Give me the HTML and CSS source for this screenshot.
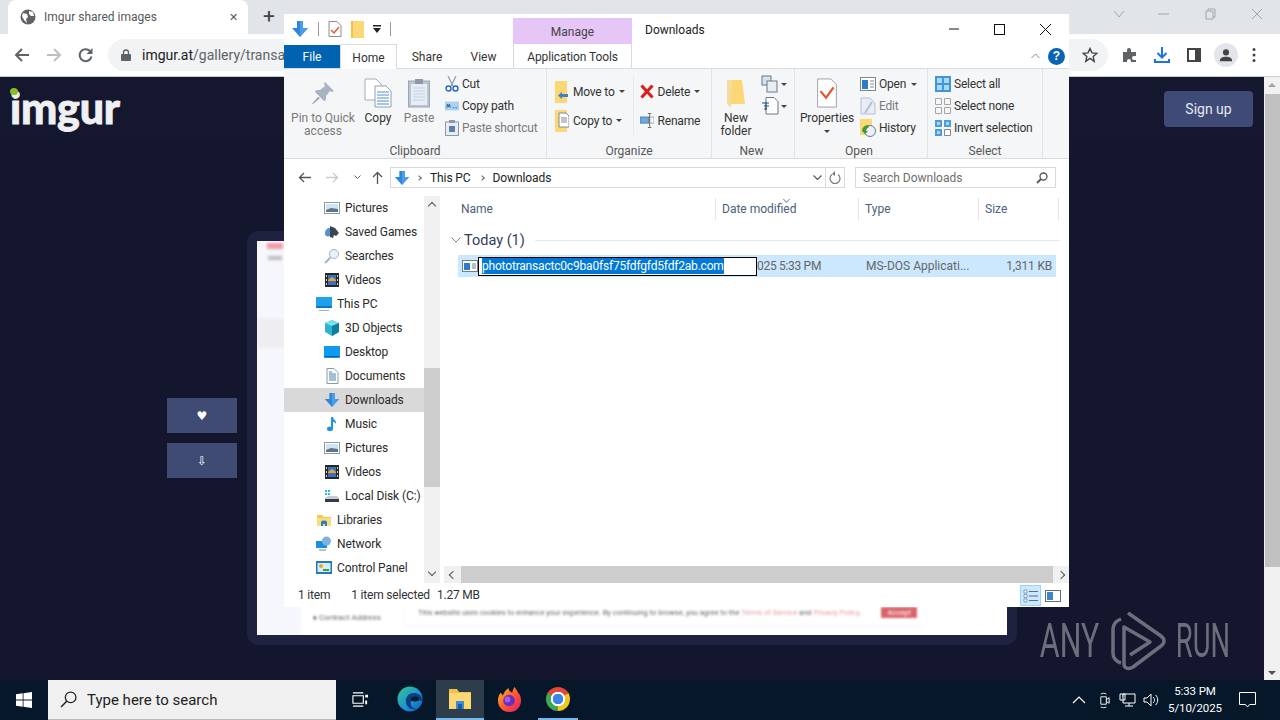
FILE: index.html
```html
<!DOCTYPE html>
<html lang="en">
<head>
<meta charset="utf-8">
<title>Imgur shared images</title>
<link rel="stylesheet" href="styles.css">
</head>
<body>
<svg class="defs" width="0" height="0" aria-hidden="true">
  <symbol id="dl" viewBox="0 0 18 18"><path d="M6 1h6v7h5l-8 9-8-9h5z" fill="#2f86d9"/><path d="M9 1h3v7h5l-8 9z" fill="#4a9de8"/></symbol>
  <symbol id="pics" viewBox="0 0 16 16"><rect x=".5" y="2.5" width="15" height="11" fill="#fff" stroke="#8d9aa8"/><rect x="2" y="4" width="12" height="8" fill="#cfe3f2"/><path d="M2 10l5-2 7 1v3H2z" fill="#5f7486"/></symbol>
  <symbol id="vids" viewBox="0 0 16 16"><rect x="1" y="1" width="14" height="14" fill="#23282e"/><rect x="4" y="3" width="8" height="10" fill="#3f6fbf"/><path d="M4 8l4-3 4 3v1H4z" fill="#e0a92c"/><path d="M2 3h1v2H2zm0 4h1v2H2zm0 4h1v2H2zm11-8h1v2h-1zm0 4h1v2h-1zm0 4h1v2h-1z" fill="#d8d8d8"/></symbol>
  <symbol id="fold" viewBox="0 0 16 16"><path d="M1 3h5l2 2h7v9H1z" fill="#f2c94f"/><path d="M1 6h14v8H1z" fill="#fbdc7d"/><path d="M5 10c0-2 6-2 6 0v4H9v-2H7v2H5z" fill="#2d7fc4"/></symbol>
</svg>

<header class="tabstrip">
  <div class="tab">
    <svg class="favicon" viewBox="0 0 16 16"><circle cx="8" cy="8" r="7.5" fill="#5f6368"/><path d="M3 4l4 1 1 3-2 2 1 4-3-3-2-4zM9 2l4 1 1 4-3 0-2-2z" fill="#fff"/></svg>
    <span class="tab-title">Imgur shared images</span>
    <span class="tab-x">✕</span>
  </div>
  <span class="tab-new">+</span>
  <div class="win-ctrl">
    <svg width="12" height="8" viewBox="0 0 12 8"><path d="M1 1l5 6 5-6" fill="none" stroke="#a4a8ad"/></svg>
    <svg width="11" height="2" viewBox="0 0 11 2"><path d="M0 1h11" stroke="#a4a8ad"/></svg>
    <svg width="11" height="12" viewBox="0 0 11 12"><path d="M3 3V1h7v8H8M1 3h7v8H1z" fill="none" stroke="#a4a8ad"/></svg>
    <svg width="12" height="12" viewBox="0 0 12 12"><path d="M1 1l10 10M11 1L1 11" stroke="#a4a8ad"/></svg>
  </div>
</header>

<nav class="toolbar">
  <svg class="tb-ic" viewBox="0 0 16 16"><path d="M15 8H2M8 2L2 8l6 6" fill="none" stroke="#5f6368" stroke-width="2"/></svg>
  <svg class="tb-ic" viewBox="0 0 16 16"><path d="M1 8h13M8 2l6 6-6 6" fill="none" stroke="#bcc0c4" stroke-width="2"/></svg>
  <svg class="tb-ic" viewBox="0 0 16 16"><path d="M13.5 9.5A6 6 0 1 1 12 4" fill="none" stroke="#5f6368" stroke-width="2"/><path d="M14.5 1v6h-6z" fill="#5f6368"/></svg>
  <div class="omnibox">
    <svg class="lock" viewBox="0 0 10 12"><path d="M2.5 5V3.5a2.5 2.5 0 0 1 5 0V5" fill="none" stroke="#5f6368" stroke-width="1.3"/><rect y="5" width="10" height="7" rx="1" fill="#5f6368"/></svg>
    <span class="url"><b>imgur.at</b>/gallery/transa</span>
    <svg class="star" viewBox="0 0 16 16"><path d="M8 1.5l2 4.4 4.7.5-3.5 3.2 1 4.7L8 11.4l-4.2 2.9 1-4.7L1.300 6.400 6 5.900z" fill="none" stroke="#444" stroke-width="1.400"/></svg>
  </div>
  <div class="tb-right">
    <svg class="tb-ic" viewBox="0 0 16 16"><path d="M1 5h4V3a2 2 0 0 1 4 0v2h5v4h-2a2 2 0 0 0 0 4h2v2H9v-1a2 2 0 0 0-4 0v1H1z" fill="#5f6368"/></svg>
    <svg class="tb-ic" viewBox="0 0 16 16"><path d="M8 0v10M3.500 6L8 10.500 12.500 6M1 12v3h14v-3" fill="none" stroke="#1a73e8" stroke-width="2"/></svg>
    <svg class="tb-ic" viewBox="0 0 16 16"><path d="M2 2h12v12H2z" fill="none" stroke="#444" stroke-width="2"/><path d="M9 2h5v12H9z" fill="#444"/></svg>
    <span class="avatar"><svg viewBox="0 0 16 16" width="14" height="14"><circle cx="8" cy="5" r="3.500" fill="#444"/><path d="M1 15c0-4 3-5 7-5s7 1 7 5z" fill="#444"/></svg></span>
    <svg class="tb-ic tb-last" viewBox="0 0 16 16"><circle cx="8" cy="2.500" r="1.500" fill="#444"/><circle cx="8" cy="8" r="1.500" fill="#444"/><circle cx="8" cy="13.500" r="1.500" fill="#444"/></svg>
  </div>
</nav>

<main class="page">
  <div class="content">
    <div class="site-header">
      <div class="logo">imgur<i class="logo-dot"></i></div>
      <button class="signup">Sign up</button>
    </div>
    <div class="gallery">
      <div class="side-btns">
        <div class="side-btn">♥</div>
        <div class="side-btn">⇩</div>
      </div>
      <div class="card">
        <div class="shot">
          <div class="shot-col">
            <i class="blob-red"></i>
            <i class="blob-gray"></i>
            <i class="blob-pale"></i>
          </div>
          <span class="contract">⬧ Contract Address</span>
          <div class="cookie">
            <span>This website uses cookies to enhance your experience. By continuing to browse, you agree to the <em>Terms of Service</em> and <em>Privacy Policy</em>.</span>
            <b>Accept</b>
          </div>
        </div>
      </div>
    </div>
  </div>
  <div class="vscroll"><i class="up"></i><i class="thumb"></i><i class="down"></i></div>
  <div class="watermark">
    <span class="wm-text wm-any">ANY</span>
    <svg class="wm-logo" viewBox="0 0 56 62"><path d="M11 9C6 11 3 14 3 19v24c0 5 2 8 8 10M18 3l33 23c4 3 4 7 0 10L23 57c-5 3-9 1-9-3V17l26 15-20 13" fill="none" stroke="#6d6e7c" stroke-width="3.500" stroke-linejoin="round"/></svg>
    <span class="wm-text wm-run">RUN</span>
  </div>
</main>

<footer class="taskbar">
  <div class="start"><svg viewBox="0 0 16 16" width="16" height="16"><path d="M0 2.200L6.700 1.300V7.600H0zM7.500 1.200L16 0V7.600H7.500zM0 8.400H6.700V14.700L0 13.800zM7.500 8.400H16V16L7.500 14.800z" fill="#fff"/></svg></div>
  <div class="searchbox">
    <svg viewBox="0 0 16 16" width="17" height="17"><circle cx="10" cy="6" r="5" fill="none" stroke="#222" stroke-width="1.200"/><path d="M6.500 9.500L1 15" stroke="#222" stroke-width="1.400"/></svg>
    <span>Type here to search</span>
  </div>
  <div class="task-btn"><svg viewBox="0 0 18 18" width="17" height="17"><path d="M1 5h11v8H1zM1 2h11M1 16h11" fill="none" stroke="#fff" stroke-width="1.200"/><path d="M14 4h3v3h-3zM14 10h2v4h-2z" fill="#fff"/></svg></div>
  <div class="task-btn"><svg viewBox="0 0 26 26" width="26" height="26"><defs><linearGradient id="edge" x1="0" y1="0" x2="1" y2="1"><stop offset="0" stop-color="#36c78f"/><stop offset=".6" stop-color="#1c8fd8"/><stop offset="1" stop-color="#0d5aa7"/></linearGradient></defs><circle cx="13" cy="13" r="12.500" fill="url(#edge)"/><path d="M25 14c0-5-4-7-8-7-6 0-9 5-8 10 1 4 5 7 10 6-4-1-6-4-5-7 1-2 3-3 6-2l5 1z" fill="#0a3f80"/><ellipse cx="18" cy="13" rx="4" ry="2.500" fill="#051a2c"/></svg></div>
  <div class="task-btn task-active"><svg viewBox="0 0 24 22" width="24" height="22"><path d="M1 1h8l2 3h12v17H1z" fill="#f2c14a"/><path d="M1 5h22v16H1z" fill="#fcd874"/><path d="M8 13h8v8H8z" fill="#3a8dd8"/><path d="M10 16h4v5h-4z" fill="#1c5d98"/></svg></div>
  <div class="task-btn"><svg viewBox="0 0 26 28" width="25" height="27"><defs><linearGradient id="fx" x1="0" y1="0" x2="1" y2="1"><stop offset="0" stop-color="#ffc21a"/><stop offset=".5" stop-color="#ff5a2e"/><stop offset="1" stop-color="#e01d6c"/></linearGradient></defs><path d="M13 27C6 27 1 22 1 15c0-3 1-6 3-8l2 3c1-3 3-6 6-8 0 3 2 4 4 5 0-2 1-4 2-6 2 2 3 4 4 6 2 2 3 5 3 8 0 7-5 12-12 12z" fill="url(#fx)"/><circle cx="12.500" cy="15" r="6" fill="#6a2dc4"/><circle cx="11" cy="14" r="3" fill="#a85ce0"/></svg></div>
  <div class="task-btn task-open"><i class="chrome"></i></div>
  <div class="tray">
    <svg viewBox="0 0 14 8" width="14" height="8"><path d="M1 7l6-6 6 6" fill="none" stroke="#fff" stroke-width="1.200"/></svg>
    <svg viewBox="0 0 14 18" width="13" height="17"><path d="M3 5h6v8H3zM9 8l3-2v6l-3-2M3 2c2-1 4-1 6 0M3 16c2 1 4 1 6 0" fill="none" stroke="#fff"/></svg>
    <svg viewBox="0 0 17 14" width="17" height="14"><path d="M4 1h12v9H4zM10 10v3M6 13h8M1 1h5v6H1zM3 3h1" fill="#051525" stroke="#fff"/></svg>
    <svg viewBox="0 0 16 14" width="16" height="14"><path d="M1 5h3l4-4v12L4 9H1zM10 4c2 2 2 4 0 6M12.500 2c3 3 3 7 0 10" fill="none" stroke="#fff"/></svg>
    <div class="clock"><span>5:33 PM</span><span>5/10/2025</span></div>
    <svg class="notif" viewBox="0 0 17 16" width="17" height="16"><path d="M.500.500h16v12h-6l-2 2.500-2-2.500h-6z" fill="none" stroke="#fff"/></svg>
  </div>
</footer>

<section class="explorer">
  <div class="ex-title">
    <div class="qat">
      <svg width="18" height="18"><use href="#dl"/></svg>
      <i class="qat-sep"></i>
      <svg width="14" height="16" viewBox="0 0 14 16"><path d="M1 .5h8l4 4v11H1z" fill="#fff" stroke="#8c8c8c"/><path d="M3 9l3 3 5-6" fill="none" stroke="#e0593a" stroke-width="1.500"/></svg>
      <svg width="13" height="17" viewBox="0 0 13 17"><path d="M0 0h13v17H0z" fill="#fbd775"/><path d="M0 0h2v17H0z" fill="#f1c04d"/></svg>
      <svg width="8" height="8" viewBox="0 0 8 8"><path d="M0 0h8v1.500H0zM0 3h8L4 8z" fill="#222"/></svg>
      <i class="qat-sep"></i>
    </div>
    <div class="manage">Manage</div>
    <div class="ex-name">Downloads</div>
    <div class="ex-ctrl">
      <svg width="10" height="2"><path d="M0 1h10" stroke="#111"/></svg>
      <svg width="11" height="11"><rect x=".5" y=".5" width="10" height="10" fill="none" stroke="#111"/></svg>
      <svg width="11" height="11"><path d="M0 0l11 11M11 0L0 11" stroke="#111"/></svg>
    </div>
  </div>
  <div class="ex-tabs">
    <span class="t-file">File</span>
    <span class="t-home">Home</span>
    <span class="t-share">Share</span>
    <span class="t-view">View</span>
    <span class="t-app">Application Tools</span>
    <div class="tabs-right">
      <svg width="9" height="6" viewBox="0 0 9 6"><path d="M.5 5l4-4 4 4" fill="none" stroke="#888"/></svg>
      <span class="help">?</span>
    </div>
  </div>

  <div class="ribbon">
    <div class="group g-clip">
      <div class="g-body">
        <div class="big b-pin dim">
          <svg width="26" height="26" viewBox="0 0 26 26"><path d="M15 2l9 9-2 1-2-1-4 5 0 4-2 1-9-9 1-2 4 0 5-4-1-2z" fill="#a9b4c2"/><path d="M8 17l-6 7 1 0 7-6z" fill="#8f9aa8"/></svg>
          <span>Pin to Quick<br>access</span>
        </div>
        <div class="big b-copy">
          <svg width="28" height="30" viewBox="0 0 28 30"><path d="M1 1h11l5 5v16H1z" fill="#fff" stroke="#a5adb6"/><path d="M11 8h11l5 5v16H11z" fill="#fff" stroke="#8ea0b4"/><path d="M13 14h12M13 17h12M13 20h12M13 23h12M13 26h12" stroke="#4a8ed0"/></svg>
          <span>Copy</span>
        </div>
        <div class="big b-paste dim">
          <svg width="22" height="30" viewBox="0 0 22 30"><rect x=".5" y="3" width="21" height="26" fill="#bcc6d2" stroke="#9aa6b4"/><rect x="3" y="6" width="16" height="21" fill="#e6edf6"/><path d="M7 1h8v5H7z" fill="#8e99a7"/><path d="M5 10h12M5 13h12M5 16h12M5 19h12M5 22h12" stroke="#c6d3e2"/></svg>
          <span>Paste</span>
        </div>
        <div class="smalls s-clip">
          <div class="sm"><svg width="14" height="16" viewBox="0 0 14 16"><path d="M3 0l5 10M11 0L6 10" stroke="#8e9ba8" stroke-width="1.200"/><circle cx="3.500" cy="12.500" r="2.500" fill="none" stroke="#2469b8" stroke-width="1.400"/><circle cx="10.500" cy="12.500" r="2.500" fill="none" stroke="#2469b8" stroke-width="1.400"/></svg><span>Cut</span></div>
          <div class="sm"><svg width="14" height="16" viewBox="0 0 16 10"><rect width="16" height="10" fill="#a9d1f2"/><path d="M2 7l1-4 1 3 1-3 1 4M9 7h1M11 7h1M13 7h1" stroke="#27507a" fill="none"/></svg><span>Copy path</span></div>
          <div class="sm dim"><svg width="14" height="16" viewBox="0 0 14 16"><rect x=".5" y="2" width="13" height="13.500" fill="#e6edf6" stroke="#8d99a6"/><path d="M4 0h6v3H4z" fill="#8d99a6"/><rect x="4" y="6" width="6" height="6" fill="#5f7fa5"/></svg><span>Paste shortcut</span></div>
        </div>
      </div>
      <div class="g-label">Clipboard</div>
    </div>

    <div class="group g-org">
      <div class="g-body">
        <div class="tall">
          <div class="sm"><svg width="14" height="22" viewBox="0 0 14 22"><path d="M0 0h12v22H0z" fill="#fbd775"/><path d="M13 13H7v-2l-4 3.500L7 18v-2h6z" fill="#3e80c4"/></svg><span>Move to</span><i class="caret"></i></div>
          <div class="sm"><svg width="14" height="22" viewBox="0 0 14 22"><path d="M0 0h12v22H0z" fill="#fbd775"/><path d="M4 3h7l3 3v11H4z" fill="#fff" stroke="#7c8a98"/><path d="M6 8h6M6 10h6M6 12h6" stroke="#7c8a98"/></svg><span>Copy to</span><i class="caret"></i></div>
        </div>
        <i class="g-sub"></i>
        <div class="tall">
          <div class="sm"><svg width="14" height="15" viewBox="0 0 14 15"><path d="M1.500 1.500l11 12M12.500 1.500l-11 12" stroke="#d8201f" stroke-width="3.200"/></svg><span>Delete</span><i class="caret"></i></div>
          <div class="sm"><svg width="14" height="15" viewBox="0 0 16 16"><rect y="4" width="10" height="7" fill="#6da9dc" stroke="#4d7ea8"/><rect x="11" y="4" width="5" height="7" fill="none" stroke="#9aa4ae"/><path d="M9 0h4M11 0v16M9 16h4" stroke="#6b5f50"/></svg><span>Rename</span></div>
        </div>
      </div>
      <div class="g-label">Organize</div>
    </div>

    <div class="group g-new">
      <div class="g-body">
        <div class="big b-folder">
          <svg width="22" height="30" viewBox="0 0 22 30"><path d="M2 2h15l3 24-18 0z" fill="#fbd775"/><path d="M2 2h5l-1 28-4-4z" fill="#f4dd9c"/></svg>
          <span>New<br>folder</span>
        </div>
        <div class="smalls">
          <div class="sm"><svg width="18" height="18" viewBox="0 0 18 18"><rect x="1" y="1" width="9" height="9" fill="#d6e2ec" stroke="#6a7886"/><rect x="6" y="6" width="10" height="11" fill="#e8eef4" stroke="#6a7886"/></svg><i class="caret"></i></div>
          <div class="sm"><svg width="18" height="18" viewBox="0 0 18 18"><path d="M5 .500h8l4 4V17H5z" fill="#fff" stroke="#6a7886"/><path d="M1 6h7M3 9h5M3 12h3M5 5v8" stroke="#24507a"/></svg><i class="caret"></i></div>
        </div>
      </div>
      <div class="g-label">New</div>
    </div>

    <div class="group g-open">
      <div class="g-body">
        <div class="big b-props">
          <svg width="22" height="32" viewBox="0 0 22 32"><path d="M1 1h14l6 6v24H1z" fill="#fff" stroke="#9e9e9e"/><path d="M4 14l6 7 8-11" fill="none" stroke="#e4572e" stroke-width="2.400"/></svg>
          <span>Properties<br><i class="caret"></i></span>
        </div>
        <div class="smalls">
          <div class="sm"><svg width="16" height="14" viewBox="0 0 16 14"><rect x=".5" y=".5" width="15" height="13" fill="#fff" stroke="#7c8792"/><rect x="2" y="3" width="6" height="9" fill="#2d7cc9"/><path d="M10 4h4M10 7h4M10 10h4" stroke="#7c8792"/></svg><span>Open</span><i class="caret"></i></div>
          <div class="sm dim"><svg width="16" height="18" viewBox="0 0 16 18"><path d="M1 1h9l5 5v11H1z" fill="#e6edf6" stroke="#b5c0cc"/><path d="M12 5L5 16" stroke="#b5c0cc" stroke-width="2"/></svg><span>Edit</span></div>
          <div class="sm"><svg width="16" height="18" viewBox="0 0 16 18"><path d="M0 0h12v16H0z" fill="#fbd775"/><circle cx="10" cy="12" r="5.500" fill="#eef" stroke="#6b7a88"/><path d="M2 12a6 6 0 0 1 6-6l1 2a5 5 0 0 0-3 4l2 0-3 3-3-3z" fill="#3e9b34"/></svg><span>History</span></div>
        </div>
      </div>
      <div class="g-label">Open</div>
    </div>

    <div class="group g-sel">
      <div class="g-body">
        <div class="smalls">
          <div class="sm"><svg width="16" height="16" viewBox="0 0 16 16"><rect width="16" height="16" fill="#3f96d8"/><path d="M2 2h5v5H2zM9 2h5v5H9zM2 9h5v5H2zM9 9h5v5H9z" fill="#a9d8f6"/></svg><span>Select all</span></div>
          <div class="sm"><svg width="16" height="16" viewBox="0 0 16 16"><path d="M.5.500h6v6h-6zM9.500.500h6v6h-6zM.5 9.500h6v6h-6zM9.500 9.500h6v6h-6z" fill="none" stroke="#a6a6a6"/></svg><span>Select none</span></div>
          <div class="sm"><svg width="16" height="16" viewBox="0 0 16 16"><path d="M9.500 9.500h6v6h-6z" fill="#fff" stroke="#7a8a9a"/><path d="M0 0h7v7H0zM0 9h7v7H0zM9 0h7v7H9z" fill="#4d9ddb"/><path d="M2 2h3v3H2zM2 11h3v3H2zM11 2h3v3h-3z" fill="#a9d8f6"/></svg><span>Invert selection</span></div>
        </div>
      </div>
      <div class="g-label">Select</div>
    </div>
  </div>

  <div class="ex-addr">
    <div class="addr-nav">
      <svg width="13" height="11" viewBox="0 0 13 11"><path d="M13 5.500H1.500M6 1L1.500 5.500 6 10" fill="none" stroke="#555" stroke-width="1.300"/></svg>
      <svg width="13" height="11" viewBox="0 0 13 11"><path d="M0 5.500h11.500M7 1l4.500 4.500L7 10" fill="none" stroke="#c9c9c9" stroke-width="1.300"/></svg>
      <svg width="7" height="5" viewBox="0 0 7 5"><path d="M.5.500l3 3 3-3" fill="none" stroke="#666"/></svg>
      <svg width="11" height="13" viewBox="0 0 11 13"><path d="M5.500 13V1.500M1 6l4.500-4.500L10 6" fill="none" stroke="#555" stroke-width="1.300"/></svg>
    </div>
    <div class="crumbs">
      <svg width="16" height="16"><use href="#dl"/></svg>
      <i class="chev"></i><span>This PC</span><i class="chev"></i><span>Downloads</span>
      <svg class="crumb-drop" width="9" height="6" viewBox="0 0 9 6"><path d="M.5.500l4 4 4-4" fill="none" stroke="#555" stroke-width="1.200"/></svg>
    </div>
    <div class="refresh"><svg width="12" height="13" viewBox="0 0 12 13"><path d="M3 3.500a5 5 0 1 0 6 0" fill="none" stroke="#777" stroke-width="1.200"/><path d="M6 0v5L3 3z" fill="#777"/></svg></div>
    <div class="search"><span>Search Downloads</span><svg width="12" height="12" viewBox="0 0 12 12"><circle cx="7.500" cy="4.500" r="3.500" fill="none" stroke="#555" stroke-width="1.300"/><path d="M5 7l-4 4" stroke="#555" stroke-width="1.800"/></svg></div>
  </div>

  <div class="ex-main">
    <div class="nav">
      <ul class="tree">
        <li class="l2"><svg><use href="#pics"/></svg>Pictures</li>
        <li class="l2"><svg viewBox="0 0 16 16"><path d="M1 9c0-3 2-5 5-5v8c-2 1-5 1-5-3z" fill="#5d8fd0"/><path d="M6 2l5 2 4 5-3 3-2-1-1 3-3-1z" fill="#3a4654"/></svg>Saved Games</li>
        <li class="l2"><svg viewBox="0 0 16 16"><circle cx="10" cy="6" r="4.500" fill="#e9f3fb" stroke="#9fb6c9"/><path d="M6.500 9.500L1 15" stroke="#a5b1bd" stroke-width="1.800"/></svg>Searches</li>
        <li class="l2"><svg><use href="#vids"/></svg>Videos</li>
        <li class="l1"><svg viewBox="0 0 16 16"><rect y="1" width="16" height="11" fill="#1fa1ec"/><path d="M0 10h16v2H0z" fill="#0d79c0"/><path d="M3 14h10v1H3z" fill="#9fb0bf"/></svg>This PC</li>
        <li class="l2"><svg viewBox="0 0 16 16"><path d="M8 0l7 3v9l-7 4-7-4V3z" fill="#2fb6cf"/><path d="M1 3l7 3 7-3-7-3z" fill="#7fe0ea"/><path d="M8 6v10l7-4V3z" fill="#0f7ea0"/></svg>3D Objects</li>
        <li class="l2"><svg viewBox="0 0 16 16"><rect y="2" width="16" height="12" fill="#0f9af0"/><path d="M1 12h14v1H1z" fill="#0a5c9e"/></svg>Desktop</li>
        <li class="l2"><svg viewBox="0 0 16 16"><path d="M3 .500h7l4 4v11H3z" fill="#fff" stroke="#8d9aa8"/><path d="M5 6h7M5 8h7M5 10h7M5 12h7M5 4h3" stroke="#4a7ea8"/></svg>Documents</li>
        <li class="l2 on"><svg><use href="#dl"/></svg>Downloads</li>
        <li class="l2"><svg viewBox="0 0 16 16"><path d="M7 1h2c0 3 4 3 3 7-1-2-2-2-3-2v7c0 3-6 3-6 0s3-3 4-2z" fill="#1f93de"/></svg>Music</li>
        <li class="l2"><svg><use href="#pics"/></svg>Pictures</li>
        <li class="l2"><svg><use href="#vids"/></svg>Videos</li>
        <li class="l2"><svg viewBox="0 0 16 16"><path d="M1 2h2v2H1zM4 2h2v2H4zM1 5h2v2H1zM4 5h2v2H4z" fill="#2fb6e6"/><path d="M1 10l3-2h9l2 2v4H1z" fill="#c5ccd3"/><path d="M1 11h14v3H1z" fill="#353b42"/></svg>Local Disk (C:)</li>
        <li class="l1"><svg><use href="#fold"/></svg>Libraries</li>
        <li class="l1"><svg viewBox="0 0 16 16"><rect y="5" width="11" height="7" fill="#1a8fe0"/><circle cx="10.500" cy="5" r="4.500" fill="#7fb2dc"/><path d="M3 14h7" stroke="#6b8ba6"/></svg>Network</li>
        <li class="l1"><svg viewBox="0 0 16 16"><rect y="1" width="16" height="13" fill="#2778b8"/><rect x="1.500" y="3" width="13" height="9" fill="#d8ecf7"/><circle cx="5" cy="6" r="2" fill="#e4a72a"/><path d="M7 9h6v2H7z" fill="#3f9a4a"/></svg>Control Panel</li>
      </ul>
      <div class="nav-scroll"><i class="up"></i><i class="nav-thumb"></i><i class="down"></i></div>
    </div>

    <div class="files">
      <div class="heads">
        <span class="h-name">Name</span>
        <span class="h-date">Date modified<i class="sort"></i></span>
        <span class="h-type">Type</span>
        <span class="h-size">Size</span>
      </div>
      <div class="grp"><svg width="10" height="6" viewBox="0 0 10 6"><path d="M.5.500l4.500 4.500 4.500-4.500" fill="none" stroke="#7a8a9a"/></svg><span>Today (1)</span><i class="grp-line"></i></div>
      <div class="row">
        <svg class="row-ic" width="16" height="12" viewBox="0 0 16 12"><rect x=".5" y=".5" width="15" height="11" fill="#fff" stroke="#6f7f8e"/><rect x="2" y="3" width="6" height="7" fill="#2d7cc9"/><path d="M10 4h4M10 6h4M10 8h4" stroke="#6f7f8e"/></svg>
        <div class="rename"><span>phototransactc0c9ba0fsf75fdfgfd5fdf2ab.com</span></div>
        <span class="c-date">025 5:33 PM</span>
        <span class="c-type">MS-DOS Applicati...</span>
        <span class="c-size">1,311 KB</span>
      </div>
      <div class="hscroll"><i class="left"></i><i class="h-thumb"></i><i class="right"></i></div>
    </div>
  </div>

  <div class="ex-status">
    <span>1 item</span>
    <span class="st-sel">1 item selected</span>
    <span>1.27 MB</span>
    <div class="views">
      <span class="v-btn v-on"><svg width="16" height="14" viewBox="0 0 16 14"><path d="M1 1h3v3H1zM1 5.500h3v3H1zM1 10h3v3H1z" fill="#fff" stroke="#5b8fb8" stroke-width=".8"/><path d="M6 2.500h9M6 7h9M6 11.500h9" stroke="#5b6f80"/></svg></span>
      <span class="v-btn"><svg width="16" height="12" viewBox="0 0 16 12"><rect x=".5" y=".5" width="15" height="11" fill="#fff" stroke="#5b6f80"/><rect x="2" y="2" width="6" height="8" fill="#3f86c4"/></svg></span>
    </div>
  </div>
</section>
</body>
</html>
```
FILE: styles.css
```css
* { box-sizing: border-box; }
html, body { margin: 0; height: 100%; }
body {
  width: 1280px; height: 720px; overflow: hidden; position: relative;
  display: flex; flex-direction: column;
  font-family: Roboto, "Liberation Sans", sans-serif; font-size: 12px; color: #222;
  background: #14162e;
}
.defs { position: absolute; }
i { display: block; font-style: normal; }

/* Chrome tab strip */
.tabstrip { height: 34px; flex: none; background: #e1e4e8; display: flex; align-items: stretch; padding-left: 8px; position: relative; }
.tab { width: 240px; background: #fff; border-radius: 8px 8px 0 0; display: flex; align-items: center; padding: 0 10px 0 12px; }
.favicon { width: 16px; height: 16px; flex: none; }
.tab-title { margin-left: 8px; font-size: 12px; color: #55585c; flex: 1; }
.tab-x { font-size: 11px; color: #555; }
.tab-new { margin-left: 12px; width: 18px; text-align: center; font-size: 21px; line-height: 33px; color: #444; }
.win-ctrl { margin-left: auto; display: flex; align-items: center; height: 28px; }
.win-ctrl svg:nth-child(1) { margin-right: 33px; }
.win-ctrl svg:nth-child(2) { margin-right: 36px; }
.win-ctrl svg:nth-child(3) { margin-right: 35px; }
.win-ctrl svg:nth-child(4) { margin-right: 17px; }

/* Chrome toolbar */
.toolbar { height: 43px; flex: none; background: #fff; border-bottom: 1px solid #c9cbce; display: flex; align-items: center; padding: 0 0 0 14px; }
.tb-ic { width: 16px; height: 16px; flex: none; margin-right: 16px; }
.omnibox { width: 1000px; height: 32px; flex: none; margin-left: -2px; background: #f1f3f4; border-radius: 16px; display: flex; align-items: center; padding: 0 10px 0 13px; }
.lock { width: 10px; height: 12px; flex: none; }
.url { margin-left: 11px; white-space: nowrap; font-size: 14px; color: #5f6368; flex: none; }
.url b { font-weight: 400; color: #202124; }
.star { width: 16px; height: 16px; margin-left: auto; }
.tb-right { display: flex; align-items: center; margin-left: 14px; }
.tb-right .tb-ic { margin-right: 16px; }
.tb-right .tb-last { margin-right: 14px; }
.avatar { width: 24px; height: 24px; margin: 0 8px 0 -4px; border-radius: 50%; background: #e3e5e8; display: flex; align-items: center; justify-content: center; }

/* Imgur page */
.page { flex: 1; min-height: 0; display: flex; position: relative; }
.content { flex: 1; min-width: 0; }
.site-header { height: 63px; background: #15172f; display: flex; justify-content: space-between; align-items: flex-start; padding: 14px 11px 0 10px; }
.logo { position: relative; font-family: Lato, sans-serif; font-weight: 900; font-size: 43px; line-height: 34px; color: #eef0f2; letter-spacing: -.2px; -webkit-text-stroke: .8px #eef0f2; }
.logo-dot { position: absolute; left: 0; top: -3px; width: 8px; height: 7px; border-radius: 50%; background: #85bf25; }
.signup { width: 89px; height: 36px; border: 0; border-radius: 4px; background: #3f4b76; color: #e4e8f2; font: 14px Roboto, sans-serif; }
.gallery { display: flex; gap: 10px; padding: 91px 0 0 167px; }
.side-btns { display: flex; flex-direction: column; gap: 10px; margin-top: 167px; }
.side-btn { width: 70px; height: 35px; background: #3f4b73; color: #fff; display: flex; align-items: center; justify-content: center; font: 12px "DejaVu Sans", sans-serif; }
.card { width: 770px; height: 414px; padding: 10px; border-radius: 12px; background: #1e2140; }
.shot { width: 750px; height: 394px; position: relative; overflow: hidden; background: #fff; }
.shot-col { width: 44px; height: 100%; background: #f6f7fc; padding: 2px 0 0 5px; filter: blur(1.500px); }
.blob-red { width: 16px; height: 6px; background: #ef9aa3; margin-left: 5px; }
.blob-gray { width: 14px; height: 4px; margin: 7px 0 0 6px; background: #bbb; }
.blob-pale { width: 36px; height: 30px; margin: 58px 0 0 -5px; background: #eeeef2; }
.contract { position: absolute; left: 56px; bottom: 12px; font-size: 8px; color: #666; filter: blur(.8px); }
.cookie { position: absolute; left: 148px; bottom: 10px; width: 520px; height: 25px; background: #fff; box-shadow: 0 1px 4px rgba(0,0,0,.05); display: flex; align-items: flex-start; padding: 7px 0 0 13px; font-size: 7.500px; line-height: 11px; color: #666; filter: blur(1px); white-space: nowrap; }
.cookie em { font-style: normal; color: #e69aa0; }
.cookie b { margin-left: 20px; width: 36px; height: 11px; background: #d9636b; color: #fff; font-weight: 400; text-align: center; border-radius: 1px; flex: none; }
.vscroll { width: 16px; flex: none; background: #f1f1f1; display: flex; flex-direction: column; align-items: center; }
.vscroll .thumb { width: 15px; height: 473px; margin-top: 2px; background: #c1c1c1; }
.vscroll .up, .vscroll .down { width: 0; height: 0; border: 4px solid transparent; }
.vscroll .up { border-bottom-color: #a3a3a3; border-top-width: 0; margin-top: 6px; margin-bottom: 5px; }
.vscroll .down { border-top-color: #505050; border-bottom-width: 0; margin-top: auto; margin-bottom: 5px; }
.watermark { position: absolute; left: 1039px; top: 533px; display: flex; align-items: center; height: 62px; width: 192px; }
.wm-text { font: 400 49px/62px Roboto, sans-serif; color: #6d6e7c; flex: none; display: flex; justify-content: center; }
.wm-any { width: 61px; transform: scaleX(.62); }
.wm-run { width: 56px; transform: scaleX(.56); }
.wm-logo { width: 56px; height: 62px; flex: none; margin: 0 9px 0 10px; }

/* Taskbar */
.taskbar { height: 40px; flex: none; background: #06172a; display: flex; align-items: stretch; position: relative; }
.start { width: 48px; display: flex; align-items: center; justify-content: center; }
.searchbox { width: 288px; background: #f0f0f0; border-bottom: 1px solid #bbb; display: flex; align-items: center; gap: 10px; padding-left: 12px; font-size: 15px; color: #222; }
.task-btn { width: 48px; display: flex; align-items: center; justify-content: center; border-bottom: 2px solid transparent; flex: none; margin-right: 1px; }
.taskbar .task-btn:nth-child(3) { width: 48px; margin-right: 2px; }
.task-active { background: #2d3d4c; border-bottom-color: #76b9ed; margin-left: 1px; }
.task-open { border-bottom-color: #76b9ed; width: 40px !important; margin-left: 4px; }
.chrome { width: 24px; height: 24px; border-radius: 50%; flex: none; position: relative; background: radial-gradient(circle, #3c84e8 0 5px, #fff 5.500px 7px, transparent 7.500px), conic-gradient(from -60deg, #e5453a 0 120deg, #f5c518 120deg 240deg, #3daa4f 240deg 360deg); }
.tray { margin-left: auto; display: flex; align-items: center; padding-right: 24px; }
.tray > svg:nth-child(1) { margin-right: 12px; }
.tray > svg:nth-child(2) { margin-right: 8px; }
.tray > svg:nth-child(3) { margin-right: 7px; }
.clock { width: 72px; margin-left: 0; display: flex; flex-direction: column; align-items: center; font-size: 11.500px; letter-spacing: -.1px; line-height: 17px; color: #fff; text-align: center; }
.notif { margin-left: 8px; }

/* Explorer window */
.explorer { position: absolute; left: 284px; top: 14px; width: 785px; height: 593px; background: #fff; display: flex; flex-direction: column; }
.ex-title { height: 30px; flex: none; display: flex; align-items: center; }
.qat { width: 229px; display: flex; align-items: center; padding-left: 7px; gap: 9px; }
.qat-sep { width: 1px; height: 14px; background: #999; }
.manage { width: 119px; height: 26px; margin-top: 4px; background: #e6c6f7; text-align: center; line-height: 28px; color: #444; }
.ex-name { margin-left: 13px; padding-top: 1px; color: #222; }
.ex-ctrl { margin-left: auto; display: flex; align-items: center; gap: 35px; padding-right: 18px; }
.ex-tabs { height: 25px; flex: none; display: flex; align-items: stretch; border-bottom: 1px solid #dadbdc; line-height: 26px; position: relative; color: #333; text-align: center; }
.t-file { width: 56px; height: 23px; margin-top: 1px; background: #0063b1; color: #fff; line-height: 24px; }
.t-home { width: 57px; background: #fff; border: 1px solid #dadbdc; border-bottom: 0; height: 25px; line-height: 26px; }
.t-share { width: 60px; }
.t-view { width: 53px; }
.t-app { width: 119px; margin-left: 3px; border-right: 1px solid #dadbdc; border-left: 1px solid #dadbdc; letter-spacing: -.1px; }
.tabs-right { margin-left: auto; display: flex; align-items: center; gap: 8px; padding-right: 4px; }
.help { width: 17px; height: 17px; border-radius: 50%; background: #0a63b4; color: #fff; font: 700 12px/17px "Liberation Sans", sans-serif; }

/* Ribbon */
.ribbon { height: 90px; flex: none; background: #f5f6f7; border-bottom: 1px solid #dadbdc; display: flex; color: #333; }
.group { display: flex; flex-direction: column; border-right: 1px solid #e2e3e4; height: 89px; flex: none; }
.g-clip { width: 263px; } .g-org { width: 165px; } .g-new { width: 83px; } .g-open { width: 133px; } .g-sel { width: 115px; }
.g-body { height: 75px; display: flex; }
.g-label { height: 14px; line-height: 14px; text-align: center; color: #555; }
.g-new .g-label { padding-right: 3px; }
.g-open .g-label { padding-right: 4px; }
.big { display: flex; flex-direction: column; align-items: center; text-align: center; padding-top: 9px; line-height: 13px; flex: none; white-space: nowrap; }
.big svg { height: 30px; margin-bottom: 4px; flex: none; }
.dim { color: #7a7a7a; }
.b-pin { width: 62px; margin-left: 8px; }
.b-copy { width: 34px; margin-left: 7px; }
.b-paste { width: 32px; margin-left: 8px; }
.b-folder { width: 44px; margin-left: 2px; }
.b-props { width: 60px; margin-left: 2px; letter-spacing: -.1px; }
.b-props .caret { margin: 5px auto 0; }
.smalls { padding-top: 4px; margin-left: 3px; }
.s-clip { margin-left: 10px; }
.g-sel .smalls { margin-left: 7px; }
.sm { display: flex; align-items: center; height: 22px; gap: 3px; white-space: nowrap; letter-spacing: -.2px; }
.tall { padding-top: 8px; }
.tall .sm { height: 29px; gap: 4px; letter-spacing: -.2px; }
.tall .caret { margin-left: 0; }
.g-org .tall:first-child { margin-left: 8px; }
.g-sub { width: 1px; height: 60px; margin: 6px 6px 0 8px; background: #e8e9ea; }
.caret { width: 0; height: 0; border: 3px solid transparent; border-top: 3px solid #444; border-bottom: 0; margin-left: 2px; }
.g-new .sm { gap: 0; height: 22px; }

/* Address row */
.ex-addr { height: 37px; flex: none; display: flex; align-items: flex-start; padding-top: 8px; }
.addr-nav { width: 106px; height: 21px; display: flex; align-items: center; padding-left: 14px; }
.addr-nav svg:nth-child(1) { margin-right: 15px; }
.addr-nav svg:nth-child(2) { margin-right: 15px; }
.addr-nav svg:nth-child(3) { margin-right: 11px; }
.crumbs { width: 435px; height: 21px; border: 1px solid #d9d9d9; border-right: 0; display: flex; align-items: center; padding-left: 3px; color: #222; letter-spacing: -.1px; }
.chev { width: 4px; height: 4px; border-top: 1px solid #666; border-right: 1px solid #666; transform: rotate(45deg); margin: 0 9px 0 7px; }
.crumbs span:nth-of-type(1) { margin-right: 2px; }
.crumbs .chev:nth-of-type(2) { margin-left: 7px; }
.crumb-drop { margin-left: auto; margin-right: 3px; }
.refresh { width: 20px; height: 21px; border: 1px solid #d9d9d9; display: flex; align-items: center; justify-content: center; }
.search { width: 201px; height: 21px; margin-left: 10px; border: 1px solid #d9d9d9; display: flex; align-items: center; justify-content: space-between; padding: 0 7px; color: #6d6d6d; }

/* Main panes */
.ex-main { flex: 1; min-height: 0; display: flex; }
.nav { width: 156px; flex: none; display: flex; }
.tree { list-style: none; margin: 0; padding: 0; width: 140px; flex: none; color: #2b2b2b; letter-spacing: -.1px; }
.tree li { height: 24px; display: flex; align-items: center; white-space: nowrap; }
.tree svg { width: 16px; height: 16px; flex: none; margin-right: 5px; }
.l2 { padding-left: 40px; }
.l1 { padding-left: 32px; }
.tree .on { background: #d9d9d9; }
.nav-scroll { width: 16px; height: 387px; background: #f0f0f0; display: flex; flex-direction: column; align-items: center; }
.nav-scroll .up, .nav-scroll .down { width: 6px; height: 6px; border-left: 1.500px solid #555; border-top: 1.500px solid #555; flex: none; }
.nav-scroll .up { transform: rotate(45deg); margin-top: 7px; }
.nav-scroll .down { transform: rotate(225deg); margin-top: auto; margin-bottom: 8px; }
.nav-thumb { width: 16px; height: 119px; margin-top: 159px; background: #cdcdcd; flex: none; }
.files { flex: 1; min-width: 0; display: flex; flex-direction: column; }
.heads { height: 25px; display: flex; align-items: center; color: #4c607a; flex: none; width: 619px; }
.heads span { height: 22px; line-height: 23px; border-right: 1px solid #e5e5e5; position: relative; }
.h-name { width: 276px; padding-left: 21px; }
.h-date { width: 143px; padding-left: 6px; }
.h-type { width: 120px; padding-left: 6px; }
.h-size { width: 80px; padding-left: 6px; }
.sort { position: absolute; left: 68px; top: -1px; width: 5px; height: 5px; border-right: 1px solid #8a97a5; border-bottom: 1px solid #8a97a5; transform: rotate(45deg); }
.grp { height: 38px; flex: none; display: flex; align-items: center; padding: 0 9px 0 11px; gap: 3px; }
.grp span { font-size: 14.500px; color: #33405c; }
.grp-line { flex: 1; height: 1px; background: #e3e9f0; margin-left: 7px; }
.row { width: 598px; height: 22px; margin-left: 18px; margin-top: -4px; background: #cce8ff; display: flex; align-items: center; flex: none; color: #666; }
.row-ic { margin-left: 4px; flex: none; }
.rename { width: 279px; height: 19px; margin-left: 0; flex: none; background: #fff; border: 1.500px solid #000; padding-left: 3px; display: flex; align-items: center; }
.rename span { background: #0078d7; color: #fff; line-height: 16px; white-space: nowrap; letter-spacing: -.19px; }
.c-date { width: 109px; flex: none; letter-spacing: -.3px; }
.c-type { width: 115px; flex: none; }
.c-size { width: 75px; text-align: right; padding-right: 4px; flex: none; letter-spacing: -.2px; }
.hscroll { margin-top: auto; margin-bottom: 1px; margin-left: 4px; height: 17px; background: #f0f0f0; display: flex; align-items: center; flex: none; }
.hscroll .left, .hscroll .right { width: 6px; height: 6px; border-left: 1.500px solid #555; border-top: 1.500px solid #555; flex: none; }
.hscroll .left { transform: rotate(-45deg); margin: 0 5px 0 6px; }
.hscroll .right { transform: rotate(135deg); margin: 0 5px; }
.h-thumb { flex: 1; height: 17px; background: #cdcdcd; }
.ex-status { height: 23px; flex: none; display: flex; align-items: center; padding: 0 0 2px 14px; color: #333; letter-spacing: -.2px; }
.st-sel { margin: 0 7px 0 21px; }
.views { margin-left: auto; display: flex; gap: 1px; padding-right: 6px; margin-top: 2px; }
.v-btn { width: 21px; height: 21px; display: flex; align-items: center; justify-content: center; border: 1px solid transparent; }
.v-on { background: #cce8ff; border-color: #99d1ff; }
```
